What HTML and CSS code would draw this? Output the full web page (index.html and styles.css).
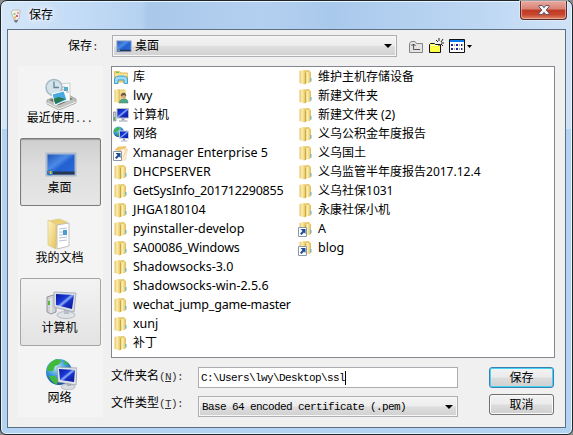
FILE: index.html
```
<!DOCTYPE html>
<html lang="zh-CN">
<head>
<meta charset="utf-8">
<title>保存</title>
<link rel="stylesheet" href="styles.css">
</head>
<body>
<svg class="defs" width="0" height="0">
  <defs>
    <linearGradient id="gold" x1="0" x2="1"><stop offset="0" stop-color="#e3c35f"/><stop offset=".4" stop-color="#fdeeb0"/><stop offset="1" stop-color="#dcbb55"/></linearGradient>
    <linearGradient id="gold2" x1="0" x2="1" y1="0" y2="1"><stop offset="0" stop-color="#fff5c4"/><stop offset="1" stop-color="#e4c35e"/></linearGradient>
    <linearGradient id="screen" x1="0" x2="1" y1="0" y2="1"><stop offset="0" stop-color="#0718a0"/><stop offset=".4" stop-color="#1a3ad8"/><stop offset=".5" stop-color="#8fb0f6"/><stop offset=".6" stop-color="#1530c8"/><stop offset="1" stop-color="#0a1590"/></linearGradient>
    <linearGradient id="desk" x1="0" x2="1" y1="0" y2="1"><stop offset="0" stop-color="#1d50b4"/><stop offset=".4" stop-color="#4c8ae6"/><stop offset=".55" stop-color="#2260d0"/><stop offset="1" stop-color="#2c6ce0"/></linearGradient>
    <radialGradient id="globe" cx=".4" cy=".3" r=".75"><stop offset="0" stop-color="#b8ecfc"/><stop offset=".5" stop-color="#3a98d8"/><stop offset="1" stop-color="#123f94"/></radialGradient>
    <symbol id="folder" viewBox="0 0 16 16">
      <path d="M5 1.500 11 1l1 1.500V14H5z" fill="#e6c96c"/>
      <path d="M7 3.500 12 2.500q1 0 1 1V13l-5 1.500z" fill="url(#gold)"/>
      <path d="M1.500 2 5.500 1q1.500 0 1.500 2l1 1v10.500L6.500 15.500 1.500 14z" fill="url(#gold)"/>
      <path d="M7.500 4v11" stroke="#c6a23e" stroke-width=".8"/>
      <path d="M12.300 9h1.200v3.500h-1.200z" fill="#62b5cf"/>
    </symbol>
    <symbol id="arrow" viewBox="0 0 16 16">
      <path d="M.5 6.500h8v9h-8z" fill="#fff" stroke="#8b98aa"/>
      <path d="M2.500 8h5v5L6 11.500 3.500 14 2 12.800 4.500 10z" fill="#1d4b96"/>
    </symbol>
    <symbol id="library" viewBox="0 0 16 16">
      <path d="M1.500 13V2.500h5L8 4h6.500v9z" fill="#f4d875" stroke="#dcbd62"/>
      <path d="M3 3.500h3" stroke="#6bbf60"/>
      <path d="M2 6h12.500" stroke="#fff6c8"/>
      <path d="M1.500 14.500V10C2 7.500 4 7 8 7s6 .5 6.500 3v4.500H11V11H5v3.500z" fill="#9bdaf5" stroke="#439cca"/>
    </symbol>
    <symbol id="user" viewBox="0 0 16 16">
      <path d="M5 1.500 11 1l2 2v11H5z" fill="#f0d98a"/>
      <path d="M1.500 2 5.500 1q1.500 0 1.500 2v12.500L1.500 14z" fill="url(#gold)"/>
      <path d="M6.500 15c0-3 1.500-4 4.500-4s4 1 4 4z" fill="#4fa889" stroke="#3b7b68" stroke-width=".5"/>
      <circle cx="10.500" cy="8" r="2.500" fill="#d9a98a"/>
      <path d="M7.800 8.500c-.5-5 6-5 5.500 0C12.500 7 10 6.500 7.800 8.500z" fill="#6d5540"/>
    </symbol>
    <symbol id="computer16" viewBox="0 0 16 16">
      <path d="M.5 5h2.500v9H.5z" fill="#c9cdd2" stroke="#777f88" stroke-width=".7"/><path d="M1 10h1v3H1z" fill="#39b54a"/>
      <path d="M4 1.500h11.500V11H4z" fill="url(#screen)" stroke="#b4bac6"/>
      <path d="M8.500 11.500h3v2h-3z" fill="#9ba3ad"/><path d="M6 14h8.500" stroke="#b5bdc7" stroke-width="1.500"/>
    </symbol>
    <symbol id="network16" viewBox="0 0 16 16">
      <circle cx="5.500" cy="5.800" r="5.200" fill="url(#globe)"/><path d="M1 4 4 1l3 1-2 3-3 2zM3 8l4 0v3z" fill="#43b548"/>
      <path d="M6.500 5h9v7.500h-9z" fill="url(#screen)" stroke="#c0cbdd"/><path d="M10 13h2v1.500h-2z" fill="#858f9c"/><path d="M8 15h6.500" stroke="#aeb6c0"/>
    </symbol>
    <symbol id="xmanager" viewBox="0 0 16 16">
      <path d="M2 5 5 2l8-.5L11 6z" fill="#f3c668" stroke="#dfb56a" stroke-width=".6"/>
      <path d="M8 4h6.500l-2 11H8z" fill="#fff5de" stroke="#ecd0a4" stroke-width=".7"/><path d="M13.500 4 10 13" stroke="#f1b769" stroke-width=".7"/>
      <use href="#arrow"/>
    </symbol>
    <symbol id="folderlink" viewBox="0 0 16 16"><use href="#folder"/><use href="#arrow"/></symbol>
    <symbol id="desktop" viewBox="0 0 32 32">
      <path d="M1.500 5.500h29v22h-29z" fill="url(#desk)" stroke="#aeb9cc" stroke-width="2"/>
      <path d="M2.500 23.500h27v3h-27z" fill="#26374f"/>
      <circle cx="5" cy="24.500" r="3" fill="#2a7cc8"/><path d="M3.500 23h1.500v1.500H3.500z" fill="#ee6634"/><path d="M5 23h1.500v1.500H5z" fill="#8ed63d"/><path d="M5 24.500h1.500V26H5z" fill="#ffd83c"/>
    </symbol>
  </defs>
</svg>

<div class="window">
  <header class="titlebar">
    <svg class="app-icon" width="16" height="16" viewBox="0 0 16 16">
      <path d="M3 4 5 2l7 0 0 2-1 7-2 1H6z" fill="#f1efe6" stroke="#b4b6ad" stroke-width=".8"/>
      <path d="M6 12h4l-1 2.500H7z" fill="#777"/><path d="M5.500 5h2v2h-2z" fill="#9dcf7b"/><path d="M8 7h2v2H8z" fill="#d35a99"/><path d="M6 8.500h2v2H6z" fill="#e9b05a"/><path d="M9 4h2v2H9z" fill="#e4a4a4"/>
    </svg>
    <h1>保存</h1>
    <button class="close" aria-label="关闭">
      <svg width="14" height="12" viewBox="0 0 14 12"><path d="M2 1.500h3.200L7 3.700l1.800-2.200H12v1.300L9.200 6 12 9.200v1.300H8.800L7 8.300l-1.800 2.200H2V9.200L4.800 6 2 2.800z" fill="#f4f4f6" stroke="#59565f" stroke-width="1"/></svg>
    </button>
  </header>

  <main class="client">
    <div class="toolbar">
      <span class="label">保存<i>:</i></span>
      <div class="combo look-in"><svg width="16" height="16"><use href="#desktop"/></svg><span>桌面</span><b class="caret"></b></div>
      <svg class="tools" width="64" height="18" viewBox="0 0 64 18">
        <path d="M1.500 14.500v-9L3 3.500h4l1.500 2h6v9z" fill="#e3e3e3" stroke="#858585"/>
        <path d="M2.500 6.500h5" stroke="#bcbcbc"/><path d="M5.500 6v5.500H12M3.500 8l2-2 2 2" fill="none" stroke="#555"/>
        <path d="M21.500 14.500V6.500l1-1h4l1 1h5v8z" fill="#ffff45" stroke="#111"/><path d="M22 7.500h9.500" stroke="#fffbd0"/>
        <path d="M31 0v3M31 6v2M28 2l2 2M35 1l-2 3M33 5h3M33 6l2 2" stroke="#222"/>
        <path d="M41.500 1.500h15v13h-15z" fill="#fff" stroke="#111"/><path d="M42 2h14v2H42z" fill="#087cec"/>
        <path d="M43 6h2v2h-2zM48 6h2v2h-2zM53 6h1v2h-1zM43 10h2v2h-2zM48 10h2v2h-2zM53 10h1v2h-1z" fill="#22229a"/>
        <path d="M46 7h1M51 7h1M46 11h1M51 11h1M54 7h1M54 11h1" stroke="#555"/>
        <path d="M59 7h5l-2.500 3z" fill="#000"/>
      </svg>
    </div>

    <div class="middle">
      <nav class="places">
        <a class="place">
          <svg width="32" height="32" viewBox="0 0 32 32">
            <path d="M2 22 20 15l11 6v4L14 32 2 26z" fill="#bfc3be" stroke="#8e938d" stroke-width=".7"/><path d="M4 22 20 17l8 4-14 6z" fill="#6c716c"/>
            <path d="M13 6 25 5v18l-12 1z" fill="#fafafa" stroke="#b9bdc3" stroke-width=".7"/><path d="M15 9h5M15 12h4M21 14h3" stroke="#aab0bd"/><path d="M19 9h4v4h-4z" fill="#5ca8c8"/>
            <circle cx="9" cy="9.500" r="8" fill="#d3e3ec" stroke="#a5b9c5" stroke-width="1.500"/><path d="M9 3.500v6h5" stroke="#688493" fill="none" stroke-width="1.300"/>
            <path d="M7 16 19 13l3 9-12 5z" fill="#4aaae0" stroke="#fff"/><path d="m8.500 21 5-2 7 2-10 5z" fill="#287b50"/><path d="M2 25 14 31l17-7" stroke="#f4f4f1" fill="none"/>
          </svg><span>最近使用<i>...</i></span></a>
        <a class="place pressed"><svg width="32" height="32"><use href="#desktop"/></svg><span>桌面</span></a>
        <a class="place">
          <svg width="32" height="32" viewBox="0 0 32 32">
            <path d="M4 3 14 1l8 3v23H5z" fill="#ecd177" stroke="#dcc480" stroke-width=".7"/>
            <path d="M12 7 24 5v23l-12 3z" fill="#fff" stroke="#aeb2b8" stroke-width=".8"/><path d="M14 11l8-1M14 14h4M14 17h4M14 20l8-1M14 23l8-1" stroke="#b6c2d4"/><path d="M18 12h4v5h-4z" fill="#4b9dcf"/>
            <path d="M3 2l8 4v25l-8-4z" fill="url(#gold2)" stroke="#dcc480" stroke-width=".7"/>
          </svg><span>我的文档</span></a>
        <a class="place hot">
          <svg width="32" height="32" viewBox="0 0 32 32">
            <path d="M2 9l6-2 3 1v16l-5 2-4-2z" fill="#cfd2d5" stroke="#7e868e" stroke-width=".8"/><path d="M6 10v15" stroke="#f5f5f5"/><path d="M3 13h2v4H3z" fill="#4eb940"/>
            <ellipse cx="21" cy="27" rx="9" ry="3.500" fill="#dfe3e7" stroke="#a0a8b0" stroke-width=".7"/><path d="M19 21h5v5h-5z" fill="#b8bec6"/>
            <path d="M9 4 31 5l-2 19L9 19z" fill="#dadfe6" stroke="#929ba6" stroke-width=".7"/><path d="m11 6 18 1-2 14-16-4z" fill="url(#screen)"/>
          </svg><span>计算机</span></a>
        <a class="place">
          <svg width="32" height="32" viewBox="0 0 32 32">
            <circle cx="14" cy="14" r="13" fill="url(#globe)"/><path d="M2 13C2 7 7 2 12 1l5 2-4 4-3 1-2 5zM4 18l6 0 3 4-1 5C8 25 5 22 4 18zM19 2l5 4-4 1z" fill="#42b93b"/>
            <ellipse cx="23" cy="29" rx="7" ry="2.800" fill="#d9dde2" stroke="#9da5ad" stroke-width=".6"/><path d="M22 24h4v4h-4z" fill="#aab2ba"/>
            <path d="m12 9 20 1-1 17-18-3z" fill="#e1e5e9" stroke="#89939e" stroke-width=".7"/><path d="m14 11 16 1-1 12-14-2z" fill="url(#screen)"/>
          </svg><span>网络</span></a>
      </nav>

      <ul class="files">
        <li><svg><use href="#library"/></svg><span>库</span></li>
        <li class="en"><svg><use href="#user"/></svg><span>lwy</span></li>
        <li><svg><use href="#computer16"/></svg><span>计算机</span></li>
        <li><svg><use href="#network16"/></svg><span>网络</span></li>
        <li class="en"><svg><use href="#xmanager"/></svg><span>Xmanager Enterprise 5</span></li>
        <li class="en"><svg><use href="#folder"/></svg><span>DHCPSERVER</span></li>
        <li class="en tight"><svg><use href="#folder"/></svg><span>GetSysInfo_201712290855</span></li>
        <li class="en"><svg><use href="#folder"/></svg><span>JHGA180104</span></li>
        <li class="en"><svg><use href="#folder"/></svg><span>pyinstaller-develop</span></li>
        <li class="en tight"><svg><use href="#folder"/></svg><span>SA00086_Windows</span></li>
        <li class="en"><svg><use href="#folder"/></svg><span>Shadowsocks-3.0</span></li>
        <li class="en"><svg><use href="#folder"/></svg><span>Shadowsocks-win-2.5.6</span></li>
        <li class="en tight"><svg><use href="#folder"/></svg><span>wechat_jump_game-master</span></li>
        <li class="en"><svg><use href="#folder"/></svg><span>xunj</span></li>
        <li><svg><use href="#folder"/></svg><span>补丁</span></li>
        <li><svg><use href="#folder"/></svg><span>维护主机存储设备</span></li>
        <li><svg><use href="#folder"/></svg><span>新建文件夹</span></li>
        <li><svg><use href="#folder"/></svg><span>新建文件夹 (2)</span></li>
        <li><svg><use href="#folder"/></svg><span>义乌公积金年度报告</span></li>
        <li><svg><use href="#folder"/></svg><span>义乌国土</span></li>
        <li><svg><use href="#folder"/></svg><span>义乌监管半年度报告<em>2017.12.4</em></span></li>
        <li><svg><use href="#folder"/></svg><span>义乌社保<em>1031</em></span></li>
        <li><svg><use href="#folder"/></svg><span>永康社保小机</span></li>
        <li class="en"><svg><use href="#folderlink"/></svg><span>A</span></li>
        <li class="en"><svg><use href="#folderlink"/></svg><span>blog</span></li>
      </ul>

      <div class="form">
        <label>文件夹名<i>(<u>N</u>):</i></label>
        <div class="input">C:\Users\lwy\Desktop\ssl<b class="cursor"></b></div>
        <button class="btn default">保存</button>
        <label>文件类型<i>(<u>T</u>):</i></label>
        <div class="combo type">Base 64 encoded certificate (.pem)<b class="caret"></b></div>
        <button class="btn">取消</button>
      </div>
    </div>
  </main>
</div>
</body>
</html>
```
FILE: styles.css
```
* { box-sizing: border-box; }
body {
  margin: 0;
  background: #8a8d88;
  font: 12px/16px "Liberation Sans", "Noto Sans CJK SC", sans-serif;
  color: #000;
  overflow: hidden;
}
.defs { position: absolute; }
i { font: 11px/16px "Liberation Mono", monospace; letter-spacing: -.6px; color: #333; }

.window {
  width: 573px;
  height: 435px;
  padding: 0 6px 6px;
  border: 1px solid #20252b;
  border-radius: 7px 7px 6px 6px;
  background:
    linear-gradient(90deg, #d5e6f8 0, #c2dbf6 80px, #b6d2f1 140px, #a9c8ea 147px, #b4d0f0 260px, #a9c9ec 330px, #bdd7f3 480px, #d0e3f6 100%) 0 0 / 100% 128px no-repeat,
    #b3d3f3;
  box-shadow: inset 0 0 0 1px #e6f5fd;
}
.titlebar { height: 28px; display: flex; align-items: flex-start; padding: 0 0 0 1px; }
.app-icon { margin: 7px 5px 0 0; }
h1 {
  margin: 6px 0 0;
  flex: 1;
  font-size: 12px;
  line-height: 16px;
  font-weight: 400;
  text-shadow: 0 0 7px #fff, 0 0 7px #fff;
}
.close {
  width: 47px;
  height: 19px;
  padding: 0;
  margin-right: -1px;
  display: flex;
  align-items: center;
  justify-content: center;
  border: 1px solid #5c2a2a;
  border-top: 0;
  border-radius: 0 0 4px 4px;
  background: linear-gradient(#e7aaa0, #d98274 45%, #bf3a26 50%, #c8452d 75%, #e08868);
  box-shadow: inset 0 0 0 1px #f0c3b899, 0 0 0 1px #e5f3fd99;
}

.client { height: 399px; border: 1px solid #5d6f82; background: #f0f0f0; }
.toolbar { display: flex; padding: 5px 0 0 60px; height: 36px; }
.label { width: 44px; padding-top: 3px; }
.combo {
  position: relative;
  display: flex;
  align-items: center;
  border: 1px solid #acaeb4;
  background: linear-gradient(#f4f4f4, #ececec 48%, #dedede 52%, #d0d0d0);
  box-shadow: inset 0 0 0 1px #f7f7f7;
}
.look-in { width: 285px; height: 22px; padding-left: 3px; gap: 3px; }
.caret {
  margin-left: auto;
  margin-right: 4px;
  border: solid transparent;
  border-width: 4px 4px 0;
  border-top-color: #000;
}
.tools { margin: 3px 0 0 11px; }

.middle {
  display: grid;
  grid-template: 292px 59px / 85px 444px;
  column-gap: 8px;
  padding-left: 10px;
}
.places { grid-row: span 2; padding: 2px; background: #f4f4f4; }
.place {
  height: 68px;
  margin-bottom: 2px;
  padding-top: 10px;
  display: flex;
  flex-direction: column;
  align-items: center;
  border-radius: 2px;
}
.place span { white-space: nowrap; margin-left: -2px; }
.place i { letter-spacing: -.8px; }
.pressed {
  padding-top: 9px;
  border: 1px solid #7c7c7c;
  background: linear-gradient(#cfcfcf, #dedede 45%, #e6e6e6);
  box-shadow: inset 0 1px 1px #999;
}
.hot { padding-top: 9px; border: 1px solid #a5a5a5; background: linear-gradient(#f3f3f3, #ebebeb 50%, #e3e3e3); }

.files {
  margin: 0;
  padding: 0 0 0 1px;
  list-style: none;
  display: grid;
  grid-template-rows: repeat(15, 19px);
  grid-auto-flow: column;
  grid-auto-columns: 185px;
  border: 1px solid #828790;
  background: #fff;
  font: 12px/19px "Noto Sans", "Noto Sans CJK SC", sans-serif;
}
.files li { display: flex; align-items: center; gap: 4px; white-space: nowrap; }
.files svg { flex: none; width: 16px; height: 16px; }
.files em { font-style: normal; }
.files .en { font-size: 12.5px; }
.files .tight { letter-spacing: -.2px; }

.form {
  display: grid;
  grid-template: 22px 22px / 87px 260px 66px;
  row-gap: 5px;
  column-gap: 0;
  justify-content: start;
  padding-top: 9px;
}
.form label { padding-top: 1px; white-space: nowrap; }
.input, .type { font: 11px/18px "Liberation Mono", monospace; letter-spacing: -.6px; white-space: pre; }
.input { display: flex; align-items: center; padding-left: 2px; height: 21px; border: 1px solid #abadb3; background: #fff; }
.type { height: 21px; margin-top: 2px; padding-left: 3px; }
.cursor { width: 1px; height: 14px; background: #000; }
.btn {
  width: 65px;
  height: 21px;
  margin-left: 31px;
  padding: 0;
  border: 1px solid #707070;
  border-radius: 3px;
  background: linear-gradient(#f3f3f3, #ebebeb 48%, #dddddd 52%, #cfcfcf);
  box-shadow: inset 0 0 0 1px #fafafa;
  font: inherit;
}
.default { border-color: #3c7fb1; box-shadow: inset 0 0 0 1px #45d2f7; }
```
